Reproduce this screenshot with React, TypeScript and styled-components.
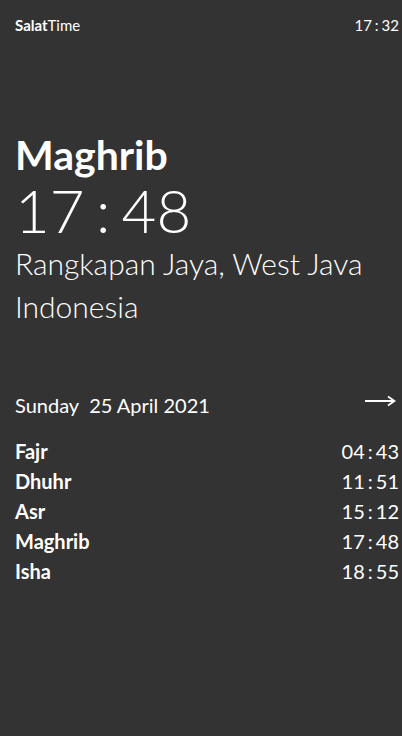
import * as React from 'react'
import styled, { createGlobalStyle } from 'styled-components'

const Global = createGlobalStyle`
  html, body {
    margin: 0;
    padding: 0;
    background: #333333;
  }
  body {
    font-family: Lato, 'Noto Sans', sans-serif;
    color: #ffffff;
  }
`

const Page = styled.div`
  width: 402px;
  height: 736px;
  background: #333333;
  display: flex;
  flex-direction: column;
  box-sizing: border-box;
  padding: 0 3px 0 15px;
`

const Header = styled.div`
  display: flex;
  flex-direction: row;
  align-items: center;
  height: 50px;
  font-size: 15px;
`

const Brand = styled.div`
  font-weight: 400;
  b {
    font-weight: 700;
  }
`

const Clock = styled.div`
  margin-left: auto;
`

const Colon = styled.span<{ $gap: number }>`
  margin: 0 ${p => p.$gap}px;
`

const Current = styled.div`
  margin-top: 81px;
  display: flex;
  flex-direction: column;
`

const PrayerName = styled.div`
  font-size: 41px;
  font-weight: 700;
  line-height: 48px;
`

const BigTime = styled.div`
  font-size: 60px;
  font-weight: 300;
  line-height: 62px;
  word-spacing: -5px;
`

const Location = styled.div`
  font-size: 30px;
  font-weight: 300;
  line-height: 44px;
  &:last-child {
    margin-top: -1px;
  }
`

const DateRow = styled.div`
  margin-top: 62px;
  display: flex;
  flex-direction: row;
  align-items: center;
  font-size: 20px;
  height: 30px;
`

const Day = styled.span`
  margin-right: 10px;
`

const Arrow = styled.svg`
  margin-left: auto;
  margin-right: 3px;
  margin-top: -9px;
`

const List = styled.div`
  margin-top: 16px;
  display: flex;
  flex-direction: column;
`

const Row = styled.div`
  display: flex;
  flex-direction: row;
  justify-content: space-between;
  font-size: 20px;
  line-height: 30px;
`

const Name = styled.span`
  font-weight: 700;
`

const Time = styled.span`
  font-weight: 400;
`

const prayers = [
  ['Fajr', '04', '43'],
  ['Dhuhr', '11', '51'],
  ['Asr', '15', '12'],
  ['Maghrib', '17', '48'],
  ['Isha', '18', '55'],
]

export default function App() {
  return (
    <Page>
      <Global />
      <Header>
        <Brand><b>Salat</b>Time</Brand>
        <Clock>17<Colon $gap={3}>:</Colon>32</Clock>
      </Header>
      <Current>
        <PrayerName>Maghrib</PrayerName>
        <BigTime>17 : 48</BigTime>
        <Location>Rangkapan Jaya, West Java</Location>
        <Location>Indonesia</Location>
      </Current>
      <DateRow>
        <Day>Sunday</Day>
        <span>25 April 2021</span>
        <Arrow width="31" height="12" viewBox="0 0 31 12">
          <path d="M0 6 H29" stroke="#fff" strokeWidth="2" />
          <path d="M23 1.5 L29.5 6 L23 10.5" stroke="#fff" strokeWidth="1.8" fill="none" />
        </Arrow>
      </DateRow>
      <List>
        {prayers.map(([n, h, m]) => (
          <Row key={n}>
            <Name>{n}</Name>
            <Time>{h}<Colon $gap={3}>:</Colon>{m}</Time>
          </Row>
        ))}
      </List>
    </Page>
  )
}
